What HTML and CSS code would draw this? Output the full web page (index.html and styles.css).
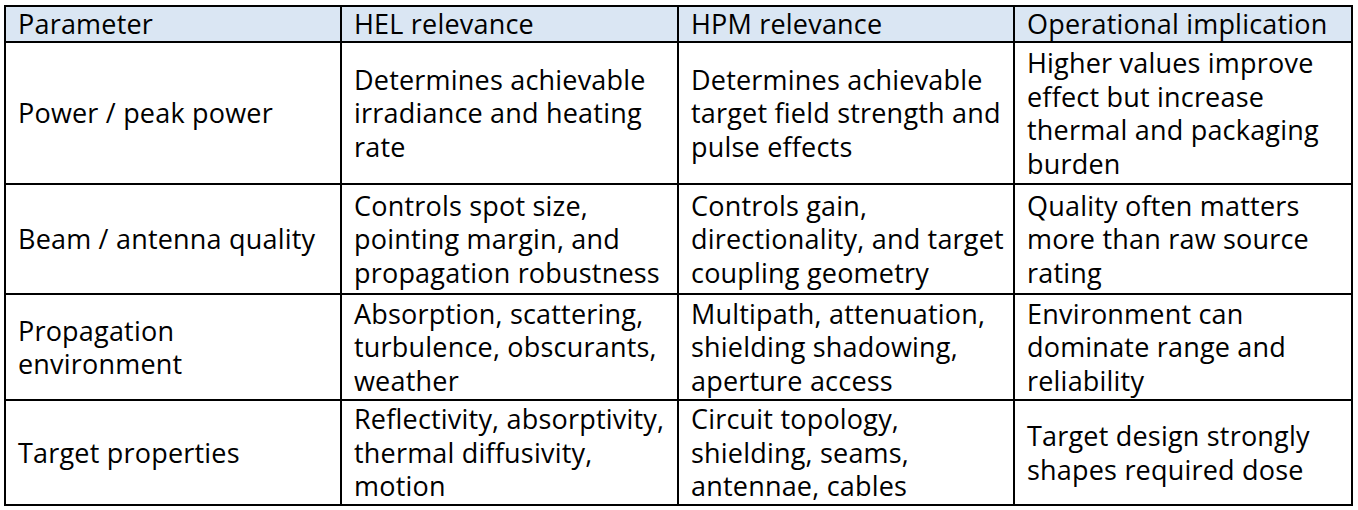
FILE: index.html
```html
<!DOCTYPE html>
<html lang="en">
<head>
<meta charset="utf-8">
<title>Parameter relevance</title>
<link rel="stylesheet" href="styles.css">
</head>
<body>
<div class="table" role="table">
  <div class="cell head">Parameter</div>
  <div class="cell head">HEL relevance</div>
  <div class="cell head">HPM relevance</div>
  <div class="cell head">Operational implication</div>

  <div class="cell">Power / peak power</div>
  <div class="cell">Determines achievable<br>irradiance and heating<br>rate</div>
  <div class="cell">Determines achievable<br>target field strength and<br>pulse effects</div>
  <div class="cell">Higher values improve<br>effect but increase<br>thermal and packaging<br>burden</div>

  <div class="cell">Beam / antenna quality</div>
  <div class="cell">Controls spot size,<br>pointing margin, and<br>propagation robustness</div>
  <div class="cell">Controls gain,<br>directionality, and target<br>coupling geometry</div>
  <div class="cell">Quality often matters<br>more than raw source<br>rating</div>

  <div class="cell">Propagation<br>environment</div>
  <div class="cell">Absorption, scattering,<br>turbulence, obscurants,<br>weather</div>
  <div class="cell">Multipath, attenuation,<br>shielding shadowing,<br>aperture access</div>
  <div class="cell">Environment can<br>dominate range and<br>reliability</div>

  <div class="cell">Target properties</div>
  <div class="cell">Reflectivity, absorptivity,<br>thermal diffusivity,<br>motion</div>
  <div class="cell">Circuit topology,<br>shielding, seams,<br>antennae, cables</div>
  <div class="cell">Target design strongly<br>shapes required dose</div>
</div>
</body>
</html>
```

FILE: styles.css
```css
html, body {
  margin: 0;
  padding: 0;
  background: #ffffff;
}

body {
  font-family: "Open Sans", "Liberation Sans", sans-serif;
  font-size: 27px;
  letter-spacing: 0.2px;
  line-height: 33.5px;
  color: #000000;
}

.table {
  margin: 5px 0 0 4px;
  width: 1349px;
  box-sizing: border-box;
  padding: 2px;
  background: #000000;
  display: grid;
  grid-template-columns: 334px 335px 334px 336px;
  grid-template-rows: 34px 140px 108px 104px 103px;
  gap: 2px;
}

.cell {
  background: #ffffff;
  display: flex;
  align-items: center;
  padding: 0 11px 0 12px;
  white-space: nowrap;
}

.cell.head {
  background: #dae6f3;
  line-height: 32px;
}
```
